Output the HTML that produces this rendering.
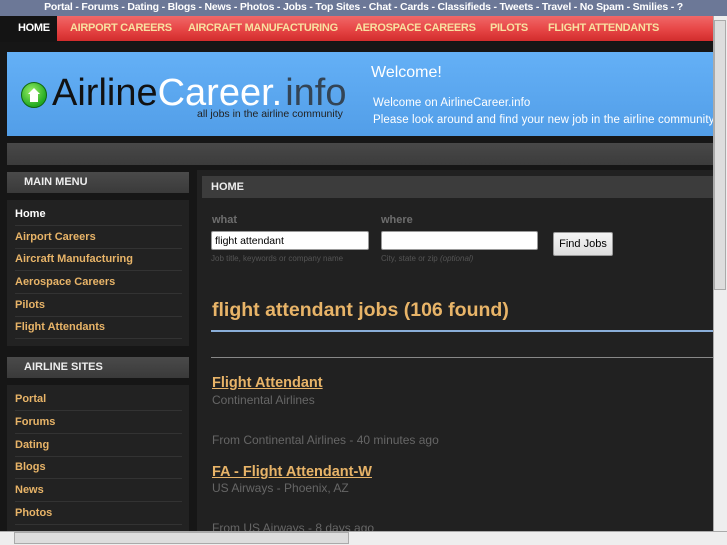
<!DOCTYPE html>
<html><head><style>
*{margin:0;padding:0;box-sizing:border-box}
body{width:727px;height:545px;overflow:hidden;background:#161616;font-family:"Liberation Sans",sans-serif;position:relative}
.a{position:absolute}
#top{left:0;top:0;width:727px;height:16px;background:#6c7897;color:#fff;font-size:10.5px;font-weight:bold;text-align:center;line-height:14px;letter-spacing:-0.2px}
#nav{left:0;top:16px;width:713px;height:26px;background:#141414}
#red{left:57px;top:16px;width:656px;height:25px;background:linear-gradient(#f06868,#e84848 50%,#d22c2c)}
.nv{top:16px;height:25px;line-height:24px;font-size:11px;font-weight:bold;color:#f8e0a0;letter-spacing:-0.3px}
#hdr{left:7px;top:52px;width:706px;height:84px;background:linear-gradient(#64b0f6,#529ee8)}
#gbar{left:7px;top:143px;width:706px;height:22px;background:linear-gradient(#484848,#3c3c3c)}
.sh{left:7px;width:182px;height:21px;background:linear-gradient(#4a4a4a,#3a3a3a);color:#eee;font-size:11px;font-weight:bold;padding-left:17px;line-height:21px}
.sl{left:7px;width:182px;background:#222}
.it{left:15px;width:167px;height:23px;border-bottom:1px solid #333;color:#e8b468;font-size:11px;font-weight:bold;line-height:23px}
#main{left:197px;top:170px;width:516px;height:361px;background:#212121}
#vs{left:713px;top:16px;width:14px;height:515px;background:#eee;border-left:1px solid #aaa}
#hs{left:0;top:531px;width:727px;height:14px;background:#eee;border-top:1px solid #aaa}
.lbl{color:#6e6e6e;font-size:11px;font-weight:bold}
.hint{color:#555;font-size:8px}
input{position:absolute;height:19px;border:1px solid #999;border-radius:2px;background:#fff;font-size:10.5px;padding-left:3px;font-family:"Liberation Sans",sans-serif}
.jl{color:#e8b468;font-size:14.5px;font-weight:bold;text-decoration:underline;left:212px}
.gr{color:#666;font-size:12px;left:212px}
</style></head><body>
<div class="a" id="top">Portal - Forums - Dating - Blogs - News - Photos - Jobs - Top Sites - Chat - Cards - Classifieds - Tweets - Travel - No Spam - Smilies - ?</div>
<div class="a" id="nav"></div>
<div class="a" id="red"></div>
<div class="a nv" style="left:18px;color:#fff">HOME</div>
<div class="a nv" style="left:70px">AIRPORT CAREERS</div>
<div class="a nv" style="left:188px">AIRCRAFT MANUFACTURING</div>
<div class="a nv" style="left:355px">AEROSPACE CAREERS</div>
<div class="a nv" style="left:490px">PILOTS</div>
<div class="a nv" style="left:548px">FLIGHT ATTENDANTS</div>
<div class="a" id="hdr"></div>
<div class="a" style="left:21px;top:82px;width:26px;height:26px;border-radius:50%;background:radial-gradient(circle at 40% 35%,#9e6,#2a2 70%);border:1px solid #161"></div>
<div class="a" style="left:28px;top:88px;width:0;height:0;border-left:6px solid transparent;border-right:6px solid transparent;border-bottom:6px solid #fff"></div>
<div class="a" style="left:30px;top:94px;width:8px;height:8px;background:#fff"></div>
<div class="a" style="left:52px;top:71px;font-size:38px;line-height:44px;color:#111;white-space:nowrap">Airline<span style="color:#fff">Career.</span><span style="color:#345;margin-left:3px">info</span></div>
<div class="a" style="left:197px;top:108px;font-size:10.5px;color:#222">all jobs in the airline community</div>
<div class="a" style="left:371px;top:64px;font-size:16px;color:#fff">Welcome!</div>
<div class="a" style="left:373px;top:95px;font-size:11.5px;letter-spacing:0.1px;color:#fff;line-height:17px;white-space:nowrap">Welcome on AirlineCareer.info<br>Please look around and find your new job in the airline community</div>
<div class="a" id="gbar"></div>
<div class="a sh" style="top:172px">MAIN MENU</div>
<div class="a sl" style="top:200px;height:146px"></div>
<div class="a it" style="top:203px;color:#fff">Home</div>
<div class="a it" style="top:226px">Airport Careers</div>
<div class="a it" style="top:248px">Aircraft Manufacturing</div>
<div class="a it" style="top:271px">Aerospace Careers</div>
<div class="a it" style="top:294px">Pilots</div>
<div class="a it" style="top:316px">Flight Attendants</div>
<div class="a sh" style="top:357px">AIRLINE SITES</div>
<div class="a sl" style="top:385px;height:146px"></div>
<div class="a it" style="top:388px">Portal</div>
<div class="a it" style="top:411px">Forums</div>
<div class="a it" style="top:434px">Dating</div>
<div class="a it" style="top:456px">Blogs</div>
<div class="a it" style="top:479px">News</div>
<div class="a it" style="top:502px">Photos</div>
<div class="a" id="main"></div>
<div class="a" style="left:202px;top:176px;width:511px;height:22px;background:#3c3c3c;color:#eee;font-size:11px;font-weight:bold;line-height:22px;padding-left:9px">HOME</div>
<div class="a lbl" style="left:212px;top:214px">what</div>
<div class="a lbl" style="left:381px;top:214px">where</div>
<input style="left:211px;top:231px;width:158px" value="flight attendant">
<input style="left:381px;top:231px;width:157px" value="">
<div class="a" style="left:553px;top:232px;width:60px;height:24px;background:linear-gradient(#f4f4f4,#ddd);border:1px solid #999;border-radius:2px;font-size:11px;line-height:22px;text-align:center">Find Jobs</div>
<div class="a hint" style="left:211px;top:254px">Job title, keywords or company name</div>
<div class="a hint" style="left:381px;top:254px">City, state or zip <i>(optional)</i></div>
<div class="a" style="left:212px;top:299px;color:#e8b468;font-size:19.5px;font-weight:bold">flight attendant jobs (106 found)</div>
<div class="a" style="left:211px;top:330px;width:502px;height:2px;background:#8aaed8"></div>
<div class="a" style="left:211px;top:357px;width:502px;height:1px;background:#888"></div>
<div class="a jl" style="top:375px">Flight Attendant</div>
<div class="a gr" style="top:393px">Continental Airlines</div>
<div class="a gr" style="top:433px">From Continental Airlines - 40 minutes ago</div>
<div class="a jl" style="top:464px">FA - Flight Attendant-W</div>
<div class="a gr" style="top:481px">US Airways - Phoenix, AZ</div>
<div class="a gr" style="top:521px">From US Airways - 8 days ago</div>
<div class="a" id="vs"></div>
<div class="a" style="left:714px;top:20px;width:12px;height:270px;background:#ddd;border:1px solid #aaa"></div>
<div class="a" id="hs"></div>
<div class="a" style="left:14px;top:532px;width:335px;height:12px;background:#ddd;border:1px solid #aaa"></div>
</body></html>
